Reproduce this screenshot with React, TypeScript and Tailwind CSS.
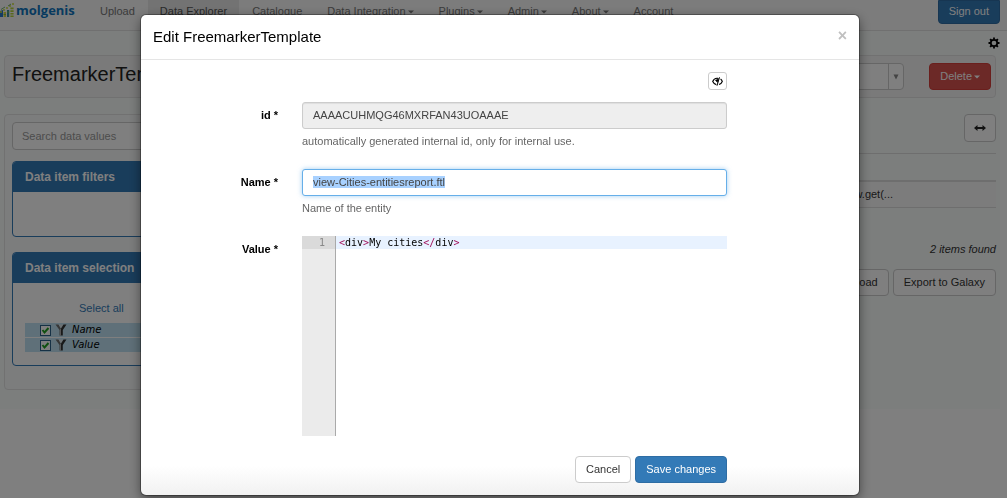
import { useEffect, useRef } from "react";
import type { ReactNode } from "react";

const navItems = [
  { label: "Upload" },
  { label: "Data Explorer", active: true },
  { label: "Catalogue" },
  { label: "Data Integration", menu: true },
  { label: "Plugins", menu: true },
  { label: "Admin", menu: true },
  { label: "About", menu: true },
  { label: "Account" },
];

function Caret() {
  return (
    <svg className="ml-0.5 inline-block h-1 w-1.5" viewBox="0 0 6 4" fill="currentColor" aria-hidden="true">
      <path d="M0 0.5h6L3 3.5z" />
    </svg>
  );
}

function Logo() {
  return (
    <a href="#" className="flex w-[88px] items-center gap-px">
      <svg className="h-4 w-[15px]" viewBox="0 0 15 16" aria-hidden="true">
        <path d="M0 9l3-1v7H0z" fill="#2878c8" />
        <path d="M0 10h2M3 8h2M6 6h2M9 4h2M12 2h2" stroke="#c8dc3c" strokeWidth="1.6" />
        <path d="M3.6 10h2.4v5H3.6z" fill="#d7d73c" />
        <path d="M7 8h2.2v7H7z" fill="#3c8ca0" />
        <path d="M10.4 5.5h3.2v1.8h-3.2zM10.4 8.2h3.2V10h-3.2zM10.4 11h3.2v1.6h-3.2zM10.4 13.4h3.2V15h-3.2z" fill="#b4d23c" />
        <path d="M7 10h2.2M3.6 12.5H6" stroke="#78be50" strokeWidth="1" />
        <path d="M1 7.500l4-2.500M8 4l3-2" stroke="#50a050" strokeWidth="0.8" />
      </svg>
      <span className="font-['Open_Sans',sans-serif] text-[13px] leading-4 font-bold text-[#0f74be]">molgenis</span>
    </a>
  );
}

function Funnel() {
  return (
    <svg className="h-3 w-3" viewBox="0 0 12 12" aria-hidden="true">
      <path d="M0.500 0.500L4.500 6v5.500h1.500V4.500L3.500 0.500z" fill="#6e6e6e" />
      <path d="M3.500 0.500L6 4.500 8.500 0.500z" fill="#d8e2e6" />
      <path d="M11.500 0.500L7.800 6v5.500H6V4.500L8.500 0.500z" fill="#333" />
      <path d="M5.500 5v6.500" stroke="#aaa" strokeWidth="1" />
    </svg>
  );
}

function Panel({ title, children }: { title: string; children: ReactNode }) {
  return (
    <section className="overflow-hidden rounded border border-[#337ab7] bg-white">
      <h2 className="bg-[#337ab7] px-3 py-[7px] text-[12px] leading-4 font-bold text-white">{title}</h2>
      {children}
    </section>
  );
}

function ItemRow({ label }: { label: string }) {
  return (
    <label className="flex h-[14px] items-center gap-1 bg-[#bfe1f2] pl-[15px] font-['DejaVu_Sans',sans-serif] text-[10px] leading-[14px] font-normal text-black italic">
      <input
        type="checkbox"
        defaultChecked
        className="h-[11px] w-[11px] appearance-none border border-[#2c628b] bg-white checked:bg-[url('data:image/svg+xml,%3Csvg%20xmlns=%22http://www.w3.org/2000/svg%22%20viewBox=%220%200%209%209%22%3E%3Cpath%20d=%22M1.5%204l2%202.500%204-4.500%22%20fill=%22none%22%20stroke=%22%2321a121%22%20stroke-width=%222%22/%3E%3C/svg%3E')]"
      />
      <Funnel />
      <span className="pl-px">{label}</span>
    </label>
  );
}

const button = "h-[27px] rounded border border-[#ccc] bg-white px-[10px] pb-px text-[#333]";

function Explorer() {
  return (
    <div className="min-h-screen bg-white">
      <header className="flex h-[31px] items-start justify-between border-b border-[#e0e0e0] bg-[#f8f8f8] pr-[7px]">
        <nav className="flex h-[30px] items-start gap-px">
          <div className="-mr-px pt-0.5">
            <Logo />
          </div>
          {navItems.map((item) => (
            <a
              key={item.label}
              href="#"
              className={
                item.active
                  ? "h-full bg-[#e7e7e7] px-3 pt-[3px] leading-4 whitespace-nowrap text-[#555]"
                  : "h-full px-3 pt-[3px] leading-4 whitespace-nowrap text-[#777]"
              }
            >
              {item.label}
              {item.menu && <Caret />}
            </a>
          ))}
        </nav>
        <button className="h-6 rounded-b border border-[#2e6da4] bg-[#337ab7] px-[10px] pb-0.5 text-white">Sign out</button>
      </header>

      <main className="mr-[7px] bg-[#f8fcfb] px-1 pb-[19px]">
        <div className="-mr-1 flex h-6 items-center justify-end">
          <button aria-label="Settings">
            <svg className="h-3 w-3" viewBox="0 0 12 12" fill="none" stroke="#000" aria-hidden="true">
              <circle cx="6" cy="6" r="3.200" strokeWidth="1.700" />
              <path d="M6 0.500v2M6 9.500v2M0.500 6h2M9.500 6h2M2.100 2.100l1.400 1.400M8.500 8.500l1.400 1.400M9.900 2.100L8.500 3.500M3.500 8.500L2.100 9.900" strokeWidth="1.800" />
            </svg>
          </button>
        </div>

        <div className="flex h-[43px] items-center justify-between rounded-sm border border-[#e3e3e3] bg-[#f5f5f5] pr-1 pl-[7px]">
          <h1 className="pb-1.5 text-[20px] leading-6 text-[#222]">FreemarkerTemplate</h1>
          <div className="flex items-center gap-[25px]">
            <div className="flex h-[27px] w-[280px] rounded border border-[#ccc] bg-white">
              <select aria-label="Entity" className="min-w-0 flex-1 appearance-none px-2">
                <option>FreemarkerTemplate</option>
              </select>
              <span className="flex w-[15px] items-center justify-center border-l border-[#ccc]">
                <svg className="h-1.5 w-1.5" viewBox="0 0 6 6" fill="#888" aria-hidden="true">
                  <path d="M0.500 0.500h5L3 5.500z" />
                </svg>
              </span>
            </div>
            <button className="h-[27px] rounded border border-[#d43f3a] bg-[#d9534f] px-[10px] pb-px text-white">
              Delete
              <Caret />
            </button>
          </div>
        </div>

        <div className="mt-4 flex items-start gap-4">
          <aside className="flex h-[276px] w-1/4 flex-col rounded-sm border border-[#e3e3e3] bg-[#f9fafa] px-[7px] pt-[7px]">
            <input
              aria-label="Search data values"
              placeholder="Search data values"
              className="h-7 rounded border border-[#ccc] bg-white px-[9px] placeholder:text-[#999]"
            />
            <div className="mt-[11px] flex flex-col gap-[15px]">
              <Panel title="Data item filters">
                <div className="h-11" />
              </Panel>
              <Panel title="Data item selection">
                <div className="h-[82px] px-3 pt-[17px]">
                  <a href="#" className="ml-[54px] block leading-4 text-[#337ab7]">
                    Select all
                  </a>
                  <div className="mt-[7px] flex flex-col gap-px">
                    <ItemRow label="Name" />
                    <ItemRow label="Value" />
                  </div>
                </div>
              </Panel>
            </div>
          </aside>

          <div className="flex flex-1 flex-col items-end">
            <button aria-label="Resize" className="flex h-7 w-8 items-center justify-center rounded border border-[#ccc] bg-white">
              <svg className="h-2 w-3" viewBox="0 0 12 8" fill="#222" aria-hidden="true">
                <path d="M0 4l3.500-3v2h5V1L12 4 8.500 7V5h-5v2z" />
              </svg>
            </button>
            <table className="mt-[11px] w-full border-t border-[#ddd]">
              <thead>
                <tr className="h-[27px] border-b-2 border-[#ddd]">
                  <th className="w-1/2 text-left">Name</th>
                  <th className="text-left">Value</th>
                </tr>
              </thead>
              <tbody>
                <tr className="h-[27px] border-b border-[#ddd] bg-[#f9f9f9]">
                  <td>view-Cities-entitiesreport.ftl</td>
                  <td className="pr-[103px] text-right">row.get(...</td>
                </tr>
              </tbody>
            </table>
            <p className="mt-[33px] leading-4 text-[#333] italic">2 items found</p>
            <div className="mt-3 flex gap-1">
              <button className={button}>Download</button>
              <button className={button}>Export to Galaxy</button>
            </div>
          </div>
        </div>
      </main>
    </div>
  );
}

function EditDialog() {
  const nameRef = useRef<HTMLInputElement>(null);
  useEffect(() => {
    nameRef.current?.focus();
    nameRef.current?.select();
  }, []);

  return (
    <div className="fixed inset-0 overflow-hidden bg-black/50 pt-[15px] pr-[7px]">
      <form
        role="dialog"
        aria-labelledby="dialog-title"
        className="mx-auto max-w-[718px] rounded-[5px] bg-white bg-linear-to-t from-[#f1f1f1] to-white to-6% shadow-[0_4px_12px_rgba(0,0,0,0.5),0_0_0_1px_rgba(0,0,0,0.3)]"
      >
        <div className="flex h-[45px] items-center justify-between border-b border-[#e5e5e5] px-3">
          <h2 id="dialog-title" className="text-[15px] leading-5 text-black">
            Edit FreemarkerTemplate
          </h2>
          <button type="button" aria-label="Close" className="pb-0.5 text-[16px] leading-4 font-bold text-[#c0c0c0]">
            ×
          </button>
        </div>

        <div className="flex flex-col pt-3 pr-[132px] pb-3">
          <button type="button" aria-label="Toggle optional fields" className="flex h-[18px] w-[19px] items-center justify-center self-end rounded-[3px] border border-[#ccc] bg-white">
            <svg className="h-[9px] w-[11px]" viewBox="0 0 11 9" fill="none" stroke="#000" aria-hidden="true">
              <path d="M6 1.400C3.500 1 1.500 2.500 0.700 4.500 1.400 6 2.600 7.200 4.300 7.600" strokeWidth="1.100" />
              <path d="M8.600 2c0.800 0.600 1.400 1.500 1.700 2.500C9.700 6 8.700 7 7 7.600" strokeWidth="1.100" />
              <path d="M3.400 3.400L6.600 1.500 5.500 5.500z" fill="#000" strokeWidth="0.500" />
              <path d="M7.500 0.300L5 8.700" strokeWidth="1" />
            </svg>
          </button>

          <div className="mt-3 grid grid-cols-[137px_1fr] gap-x-6">
            <label htmlFor="entity-id" className="pt-[5px] text-right leading-4 font-bold text-black">
              id *
            </label>
            <div className="flex h-[67px] flex-col">
              <input
                id="entity-id"
                readOnly
                defaultValue="AAAACUHMQG46MXRFAN43UOAAAE"
                className="h-[27px] rounded-[3px] border border-[#ccc] bg-[#eee] px-[10px] pb-px text-[#444] shadow-[inset_0_1px_1px_rgba(0,0,0,0.07)]"
              />
              <p className="mt-1 leading-4 text-[#666]">automatically generated internal id, only for internal use.</p>
            </div>

            <label htmlFor="entity-name" className="pt-[5px] text-right leading-4 font-bold text-black">
              Name *
            </label>
            <div className="flex h-[67px] flex-col">
              <input
                id="entity-name"
                ref={nameRef}
                defaultValue="view-Cities-entitiesreport.ftl"
                className="h-[27px] rounded-[3px] border border-[#66afe9] bg-white px-[10px] pb-px text-[#444] shadow-[0_0_5px_rgba(102,175,233,0.6)] outline-none selection:bg-[#a8d1ff] selection:text-[#444]"
              />
              <p className="mt-1 leading-4 text-[#666]">Name of the entity</p>
            </div>

            <span id="value-label" className="pt-[5px] text-right leading-4 font-bold text-black">
              Value *
            </span>
            <div className="flex h-[200px] font-['DejaVu_Sans_Mono',monospace] text-[10px] leading-[13px]">
              <div className="w-[34px] border-r border-[#aaa] bg-[#ebebeb] text-right text-[#888]">
                <div className="bg-[#dadada] pr-2.5">1</div>
              </div>
              <div role="textbox" aria-labelledby="value-label" aria-multiline="true" className="flex-1 text-black">
                <div className="bg-[#e8f2ff] pl-[3px]">
                  <span className="text-[#a0105a]">&lt;</span>div<span className="text-[#a0105a]">&gt;</span>My cities
                  <span className="text-[#a0105a]">&lt;/</span>div<span className="text-[#a0105a]">&gt;</span>
                </div>
              </div>
            </div>
          </div>

          <div className="mt-5 flex justify-end gap-1">
            <button type="button" className={button}>
              Cancel
            </button>
            <button type="submit" className="h-[27px] rounded border border-[#2e6da4] bg-[#337ab7] px-[10px] pb-px text-white">
              Save changes
            </button>
          </div>
        </div>
      </form>
    </div>
  );
}

export default function App() {
  return (
    <div className="font-['Liberation_Sans',Arial,sans-serif] text-[11px] leading-4 text-[#333]">
      <Explorer />
      <EditDialog />
    </div>
  );
}
